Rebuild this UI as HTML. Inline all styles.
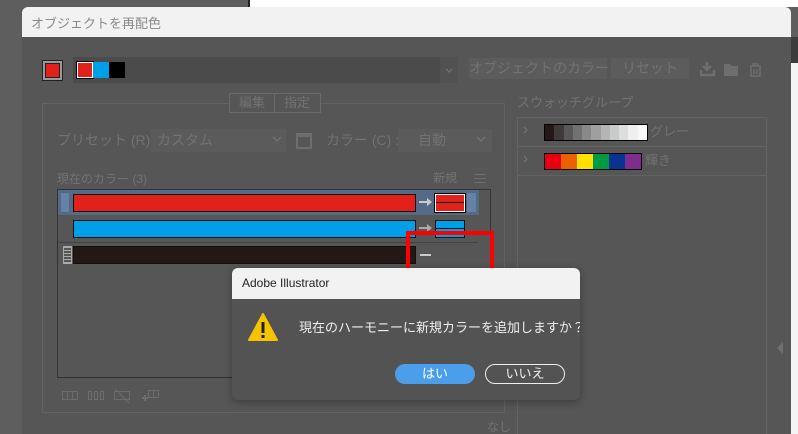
<!DOCTYPE html>
<html><head><meta charset="utf-8"><style>
*{margin:0;padding:0;box-sizing:border-box}
body{width:798px;height:434px;overflow:hidden;background:#5e5e5e;position:relative;font-family:"Liberation Sans","Noto Sans CJK JP",sans-serif;font-size:13px}
.a{position:absolute}
.t{color:#727272;font-size:14px;white-space:nowrap;line-height:1.2}
</style></head><body>
<div class="a" style="left:248px;top:0;width:550px;height:7px;background:#fff;border-left:2px solid #222"></div>
<div class="a" style="left:791px;top:37px;width:7px;height:397px;background:#f4f4f4"></div>
<div class="a" style="left:791px;top:37px;width:7px;height:26px;background:#3c3c3c"></div>
<div class="a" style="left:22px;top:7px;width:769px;height:427px;background:#565656;border-radius:6px 6px 0 0;overflow:hidden">
 <div class="a" style="left:0;top:0;width:769px;height:30px;background:#f2f2f2;color:#8a8a8a;font-size:13px;padding:6px 9px">オブジェクトを再配色</div>
</div>
<!-- top row -->
<div class="a" style="left:42px;top:60px;width:21px;height:21px;border:1px solid #222;background:#999;padding:2px"><div style="width:15px;height:15px;background:#e3211b;border:1px solid #222"></div></div>
<div class="a" style="left:73px;top:57px;width:385px;height:26px;background:#4b4b4b"></div>
<div class="a" style="left:77px;top:62px;width:16px;height:16px;background:#e3211b;border:1px solid #fff;outline:1px solid #000"></div>
<div class="a" style="left:93px;top:62px;width:16px;height:16px;background:#00a0e8"></div>
<div class="a" style="left:109px;top:62px;width:16px;height:16px;background:#000"></div>
<div class="a" style="left:440px;top:57px;width:18px;height:26px;background:#525252"><svg width="18" height="26"><path d="M6 12 L9 15 L12 12" stroke="#777" fill="none"/></svg></div>
<div class="a t" style="left:469px;top:58px;width:138px;height:21px;background:#5c5c5c;text-align:center;line-height:21px">オブジェクトのカラー</div>
<div class="a t" style="left:611px;top:58px;width:78px;height:21px;background:#5c5c5c;text-align:center;line-height:21px">リセット</div>
<svg class="a" style="left:700px;top:60px" width="64" height="20"><path d="M7 2 V9 M3 6 L7 10 L11 6 M1 10 V15 H14 V10" stroke="#6e6e6e" stroke-width="2.5" fill="none"/><path d="M24 4 H30 L32 6 H38 V16 H24 Z" fill="#6e6e6e"/><path d="M50 6 H61 M53 6 V4 H58 V6 M51 7 V16 H60 V7 M54 9 V14 M57 9 V14" stroke="#6e6e6e" stroke-width="1.5" fill="none"/></svg>
<!-- left panel -->
<div class="a" style="left:42px;top:103px;width:463px;height:310px;border:1px solid #626262"></div>
<div class="a t" style="left:229px;top:93px;width:92px;height:20px;background:#565656;border:1px solid #6a6a6a;font-size:13px;line-height:18px"><span style="display:inline-block;width:45px;text-align:center;border-right:1px solid #6a6a6a">編集</span><span style="display:inline-block;width:44px;text-align:center">指定</span></div>
<div class="a t" style="left:57px;top:132px">プリセット (R) :</div>
<div class="a t" style="left:151px;top:129px;width:135px;height:23px;background:#5b5b5b;padding:3px 6px">カスタム</div>
<svg class="a" style="left:272px;top:135px" width="10" height="8"><path d="M1 2 L5 6 L9 2" stroke="#777" fill="none"/></svg>
<div class="a" style="left:296px;top:133px;width:16px;height:16px;border:2px solid #6e6e6e;border-top-width:4px"></div>
<div class="a t" style="left:326px;top:132px">カラー (C) :</div>
<div class="a t" style="left:398px;top:129px;width:94px;height:23px;background:#5b5b5b;padding:3px 20px">自動</div>
<svg class="a" style="left:476px;top:135px" width="10" height="8"><path d="M1 2 L5 6 L9 2" stroke="#777" fill="none"/></svg>
<div class="a t" style="left:57px;top:172px;font-size:12px">現在のカラー (3)</div>
<div class="a t" style="left:433px;top:171px;font-size:12px">新規</div>
<div class="a" style="left:474px;top:174px;width:12px;height:9px;border-top:1px solid #6e6e6e;border-bottom:1px solid #6e6e6e"><div style="margin-top:3px;border-top:1px solid #6e6e6e"></div></div>
<div class="a" style="left:57px;top:189px;width:434px;height:189px;border:1px solid #333"></div>
<div class="a" style="left:58px;top:190px;width:421px;height:25px;background:#546a86"></div>
<div class="a" style="left:61px;top:193px;width:8px;height:19px;background:#6582a6"></div>
<div class="a" style="left:467px;top:193px;width:9px;height:19px;background:#6582a6"></div>
<div class="a" style="left:73px;top:194px;width:343px;height:18px;background:#e3211b;border:1px solid #111"></div>
<svg class="a" style="left:419px;top:197px" width="14" height="10"><path d="M0 5 H9" stroke="#ccc" stroke-width="2"/><path d="M8 1 L13 5 L8 9 Z" fill="#ccc"/></svg>
<div class="a" style="left:435px;top:194px;width:30px;height:18px;border:1px solid #fff;outline:1px solid #000;background:#e3211b"><div style="margin-top:7px;border-top:1px solid #000"></div></div>
<div class="a" style="left:73px;top:220px;width:343px;height:18px;background:#00a0e8;border:1px solid #111"></div>
<svg class="a" style="left:419px;top:223px" width="14" height="10"><path d="M0 5 H9" stroke="#aaa" stroke-width="2"/><path d="M8 1 L13 5 L8 9 Z" fill="#aaa"/></svg>
<div class="a" style="left:435px;top:220px;width:30px;height:18px;border:1px solid #111;background:#00a0e8"><div style="margin-top:7px;border-top:1px solid #000"></div></div>
<div class="a" style="left:58px;top:242px;width:420px;height:1px;background:#444"></div>
<div class="a" style="left:63px;top:246px;width:9px;height:18px;border:1px solid #aaa;background:repeating-linear-gradient(#aaa 0 1px,#555 1px 3px)"></div>
<div class="a" style="left:73px;top:246px;width:343px;height:18px;background:#231816;border:1px solid #111"></div>
<div class="a" style="left:420px;top:254px;width:11px;height:2px;background:#ccc"></div>
<div class="a" style="left:406px;top:231px;width:88px;height:47px;border:4px solid #ff0000"></div>
<svg class="a" style="left:60px;top:388px" width="100" height="16"><g stroke="#6c6c6c" fill="none"><rect x="2.5" y="3.5" width="15" height="8"/><path d="M7.5 3.5 V11.5 M12.5 3.5 V11.5"/><rect x="28.5" y="3.5" width="3" height="8"/><rect x="34.5" y="3.5" width="3" height="8"/><rect x="40.5" y="3.5" width="3" height="8"/><rect x="54.5" y="3.5" width="15" height="8"/><path d="M55 1 L69 15"/><rect x="88.5" y="2.5" width="10" height="7"/><path d="M93.5 2.5 V9.5"/><path d="M82 10 H88 M85 7 V13" stroke-width="2"/></g></svg>
<div class="a t" style="left:487px;top:420px;font-size:12px">なし</div>
<!-- swatch groups -->
<div class="a t" style="left:517px;top:95px;font-size:13px">スウォッチグループ</div>
<div class="a" style="left:517px;top:117px;width:250px;height:317px;border:1px solid #626262;border-bottom:none"></div>
<div class="a" style="left:517px;top:146px;width:250px;height:1px;background:#626262"></div>
<div class="a" style="left:517px;top:175px;width:250px;height:1px;background:#626262"></div>
<svg class="a" style="left:523px;top:126px" width="6" height="40"><path d="M1 1 L4 4 L1 7 M1 30 L4 33 L1 36" stroke="#777" fill="none"/></svg>
<div class="a" style="left:544px;top:124px;width:104px;height:17px;border:1px solid #000;display:flex">
<i style="flex:1;background:#231816"></i><i style="flex:1;background:#3e3a39"></i><i style="flex:1;background:#595757"></i><i style="flex:1;background:#727171"></i><i style="flex:1;background:#898989"></i><i style="flex:1;background:#9f9fa0"></i><i style="flex:1;background:#b5b5b6"></i><i style="flex:1;background:#c9caca"></i><i style="flex:1;background:#dcdddd"></i><i style="flex:1;background:#efefef"></i><i style="flex:1;background:#f7f8f8"></i></div>
<div class="a t" style="left:650px;top:124px;font-size:13px">グレー</div>
<div class="a" style="left:544px;top:153px;width:98px;height:17px;border:1px solid #000;display:flex">
<i style="flex:1;background:#e60012"></i><i style="flex:1;background:#eb6100"></i><i style="flex:1;background:#ffe100"></i><i style="flex:1;background:#009944"></i><i style="flex:1;background:#0a3290"></i><i style="flex:1;background:#7f2d8c"></i></div>
<div class="a t" style="left:645px;top:153px;font-size:13px">輝き</div>
<div class="a" style="left:777px;top:342px;width:0;height:0;border:6px solid transparent;border-right:6px solid #707070;border-left:none"></div>
<!-- alert -->
<div class="a" style="left:232px;top:268px;width:348px;height:132px;background:#535353;border-radius:6px;overflow:hidden;box-shadow:0 2px 8px rgba(0,0,0,.3)">
 <div style="height:31px;background:#f2f2f2;color:#222;font-size:12px;padding:8px 10px">Adobe Illustrator</div>
 <svg class="a" style="left:16px;top:45px" width="30" height="28" viewBox="0 0 30 28"><path d="M15 1 L29 27 L1 27 Z" fill="#f4c400" stroke="#f4c400" stroke-linejoin="round" stroke-width="2"/><rect x="13.5" y="9" width="3" height="11" fill="#222"/><rect x="13.5" y="22" width="3" height="3" fill="#222"/></svg>
 <div class="a" style="left:67px;top:49px;color:#eee;font-size:13px;white-space:nowrap">現在のハーモニーに新規カラーを追加しますか？</div>
 <div class="a" style="left:163px;top:96px;width:80px;height:20px;border-radius:10px;background:#4a9eea;color:#fff;text-align:center;line-height:20px;font-size:13px">はい</div>
 <div class="a" style="left:253px;top:96px;width:80px;height:20px;border-radius:10px;border:1.5px solid #eee;color:#eee;text-align:center;line-height:17px;font-size:13px">いいえ</div>
</div>
</body></html>
